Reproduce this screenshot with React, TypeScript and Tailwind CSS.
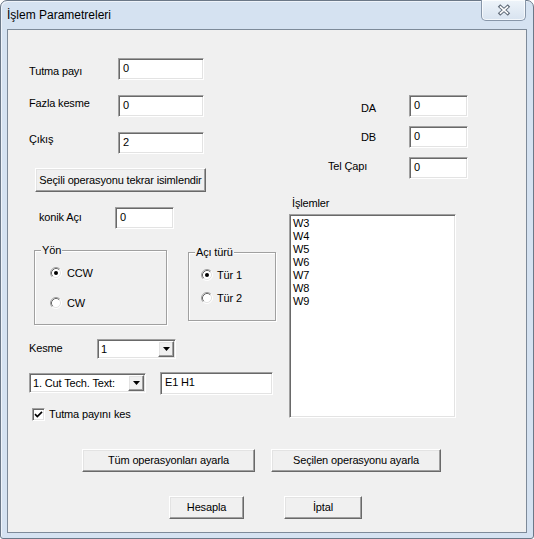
import React from 'react'

// classic win32 3d edges
const sunken =
  'border border-t-[#a0a0a0] border-l-[#a0a0a0] border-b-white border-r-white shadow-[inset_1px_1px_0_#696969,inset_-1px_-1px_0_#e3e3e3] bg-white'
const raised =
  'border border-t-white border-l-white border-b-[#696969] border-r-[#696969] shadow-[inset_-1px_-1px_0_#a0a0a0,inset_1px_1px_0_#e3e3e3] bg-[#f0f0f0]'
const etched = 'border border-[#a0a0a0] shadow-[inset_1px_1px_0_#fff,1px_1px_0_#fff]'

function TextBox({ value, className }: { value: string; className: string }) {
  return (
    <div className={`${sunken} ${className} pl-[4px] pt-[3px] leading-[13px]`}>{value}</div>
  )
}

function Button({ children, className }: { children: React.ReactNode; className: string }) {
  return (
    <div className={`${raised} ${className} flex items-center justify-center whitespace-nowrap leading-[13px]`}>
      {children}
    </div>
  )
}

function Combo({ value, className }: { value: string; className: string }) {
  return (
    <div className={`${sunken} ${className} flex items-stretch`}>
      <span className="flex flex-1 items-center overflow-hidden whitespace-nowrap pl-[3px] leading-[13px]">
        {value}
      </span>
      <div className={`${raised} m-[1px] flex w-[16px] items-center justify-center`}>
        <svg width="7" height="4" viewBox="0 0 7 4">
          <path d="M0 0h7L3.5 4z" fill="#000" />
        </svg>
      </div>
    </div>
  )
}

function Radio({ checked }: { checked?: boolean }) {
  return (
    <svg width="12" height="12" viewBox="0 0 12 12" className="shrink-0">
      <circle cx="6" cy="6" r="5" fill="#fff" />
      <path d="M2.11 9.89A5.5 5.5 0 0 1 9.89 2.11" fill="none" stroke="#a0a0a0" />
      <path d="M9.89 2.11A5.5 5.5 0 0 1 2.11 9.89" fill="none" stroke="#fff" />
      <path d="M2.82 9.18A4.5 4.5 0 0 1 9.18 2.82" fill="none" stroke="#696969" />
      <path d="M9.18 2.82A4.5 4.5 0 0 1 2.82 9.18" fill="none" stroke="#e3e3e3" />
      {checked && <circle cx="6" cy="6" r="2" fill="#000" />}
    </svg>
  )
}

function GroupLegend({ children }: { children: React.ReactNode }) {
  return (
    <span className="absolute -top-[7px] left-[6px] bg-[#f0f0f0] px-[1px] leading-[13px]">
      {children}
    </span>
  )
}

const items = ['W3', 'W4', 'W5', 'W6', 'W7', 'W8', 'W9']

export default function App() {
  return (
    <div className="h-[539px] w-[534px] bg-white font-['Liberation_Sans',Arial,sans-serif] text-[11px] tracking-[-0.15px] text-black">
      <div className="flex h-full w-full flex-col rounded-t-[7px] rounded-b-[3px] border border-[#6b7888] bg-[#d5e2f1] px-[6px] pb-[5px] shadow-[inset_1px_1px_0_#eef3fa]">
        {/* Title bar */}
        <div className="flex h-[28px] items-start">
          <span className="pt-[7px] text-[12px] leading-[15px] tracking-normal">İşlem Parametreleri</span>
          <div className="-mt-[1px] ml-auto mr-[1px] flex h-[21px] w-[45px] items-center justify-center rounded-b-[5px] border border-t-0 border-[#8796a9] bg-linear-to-b from-[#eef4fa] to-[#d8e3f0] shadow-[inset_0_0_0_1px_rgba(255,255,255,0.7)]">
            <svg width="14" height="12" viewBox="0 0 14 12">
              <path d="M2 1.5L12 10.5M12 1.5L2 10.5" stroke="#5f6a78" strokeWidth="3.6" />
              <path d="M2.9 2.3L11.1 9.7M11.1 2.3L2.9 9.7" stroke="#fff" strokeWidth="1.6" />
            </svg>
          </div>
        </div>

        {/* Client area */}
        <div className="flex flex-1 flex-col border border-[#7d8a99] bg-[#f0f0f0]">
          <div className="flex h-[419px]">
            {/* Left column */}
            <div className="flex w-[277px] flex-col">
              <div className="mt-[28px] flex items-start pl-[21px]">
                <span className="mt-[7px] w-[89px] leading-[13px]">Tutma payı</span>
                <TextBox value="0" className="h-[22px] w-[86px]" />
              </div>
              <div className="mt-[15px] flex items-start pl-[21px]">
                <span className="mt-[2px] w-[89px] leading-[13px]">Fazla kesme</span>
                <TextBox value="0" className="h-[22px] w-[86px]" />
              </div>
              <div className="mt-[15px] flex items-start pl-[21px]">
                <span className="mt-[1px] w-[89px] leading-[13px]">Çıkış</span>
                <TextBox value="2" className="h-[22px] w-[86px]" />
              </div>
              <Button className="ml-[27px] mt-[14px] h-[24px] w-[171px]">
                Seçili operasyonu tekrar isimlendir
              </Button>
              <div className="mt-[15px] flex items-start pl-[31px]">
                <span className="mt-[4px] w-[76px] leading-[13px]">konik Açı</span>
                <TextBox value="0" className="h-[22px] w-[59px]" />
              </div>

              {/* Group boxes */}
              <div className="mt-[21px] flex items-start pl-[26px]">
                <div className={`${etched} relative flex h-[75px] w-[133px] flex-col pl-[15px] pt-[16px]`}>
                  <GroupLegend>Yön</GroupLegend>
                  <div className="flex h-[12px] items-center gap-[5px]">
                    <Radio checked />
                    <span className="leading-[13px]">CCW</span>
                  </div>
                  <div className="mt-[18px] flex h-[12px] items-center gap-[5px]">
                    <Radio />
                    <span className="leading-[13px]">CW</span>
                  </div>
                </div>
                <div className={`${etched} relative ml-[21px] mt-[2px] flex h-[69px] w-[88px] flex-col pl-[12px] pt-[16px]`}>
                  <GroupLegend>Açı türü</GroupLegend>
                  <div className="flex h-[12px] items-center gap-[4px]">
                    <Radio checked />
                    <span className="leading-[13px]">Tür 1</span>
                  </div>
                  <div className="mt-[11px] flex h-[12px] items-center gap-[4px]">
                    <Radio />
                    <span className="leading-[13px]">Tür 2</span>
                  </div>
                </div>
              </div>

              <div className="mt-[14px] flex items-start pl-[21px]">
                <span className="mt-[3px] w-[68px] leading-[13px]">Kesme</span>
                <Combo value="1" className="h-[20px] w-[79px]" />
              </div>
              <div className="mt-[14px] flex items-start pl-[21px]">
                <Combo value="1. Cut Tech. Text:" className="h-[20px] w-[117px]" />
                <TextBox value="E1 H1" className="-mt-[1px] ml-[14px] h-[23px] w-[113px]" />
              </div>
              <div className="mt-[13px] flex items-center gap-[4px] pl-[24px]">
                <div className={`${sunken} flex h-[13px] w-[13px] items-center justify-center`}>
                  <svg width="9" height="9" viewBox="0 0 9 9">
                    <path d="M1 4.2L3.3 6.5L8 1.8" stroke="#000" strokeWidth="1.7" fill="none" />
                  </svg>
                </div>
                <span className="leading-[13px]">Tutma payını kes</span>
              </div>
            </div>

            {/* Right column */}
            <div className="flex flex-1 flex-col">
              <div className="mt-[65px] flex items-start pl-[76px]">
                <span className="mt-[7px] w-[48px] leading-[13px]">DA</span>
                <TextBox value="0" className="h-[22px] w-[59px]" />
              </div>
              <div className="mt-[9px] flex items-start pl-[76px]">
                <span className="mt-[5px] w-[48px] leading-[13px]">DB</span>
                <TextBox value="0" className="h-[22px] w-[59px]" />
              </div>
              <div className="mt-[9px] flex items-start pl-[43px]">
                <span className="mt-[3px] w-[81px] leading-[13px]">Tel Çapı</span>
                <TextBox value="0" className="h-[22px] w-[59px]" />
              </div>
              <span className="mt-[18px] pl-[7px] leading-[13px]">İşlemler</span>
              <div className={`${sunken} ml-[4px] mt-[4px] flex h-[204px] w-[167px] flex-col pl-[3px] pt-[2px]`}>
                {items.map((it) => (
                  <span key={it} className="leading-[13px]">
                    {it}
                  </span>
                ))}
              </div>
            </div>
          </div>

          {/* Bottom buttons */}
          <div className="flex pl-[74px]">
            <Button className="h-[23px] w-[173px]">Tüm operasyonları ayarla</Button>
            <Button className="ml-[16px] h-[23px] w-[170px]">Seçilen operasyonu ayarla</Button>
          </div>
          <div className="mt-[24px] flex pl-[161px]">
            <Button className="h-[23px] w-[75px]">Hesapla</Button>
            <Button className="ml-[40px] h-[23px] w-[78px]">İptal</Button>
          </div>
        </div>
      </div>
    </div>
  )
}
